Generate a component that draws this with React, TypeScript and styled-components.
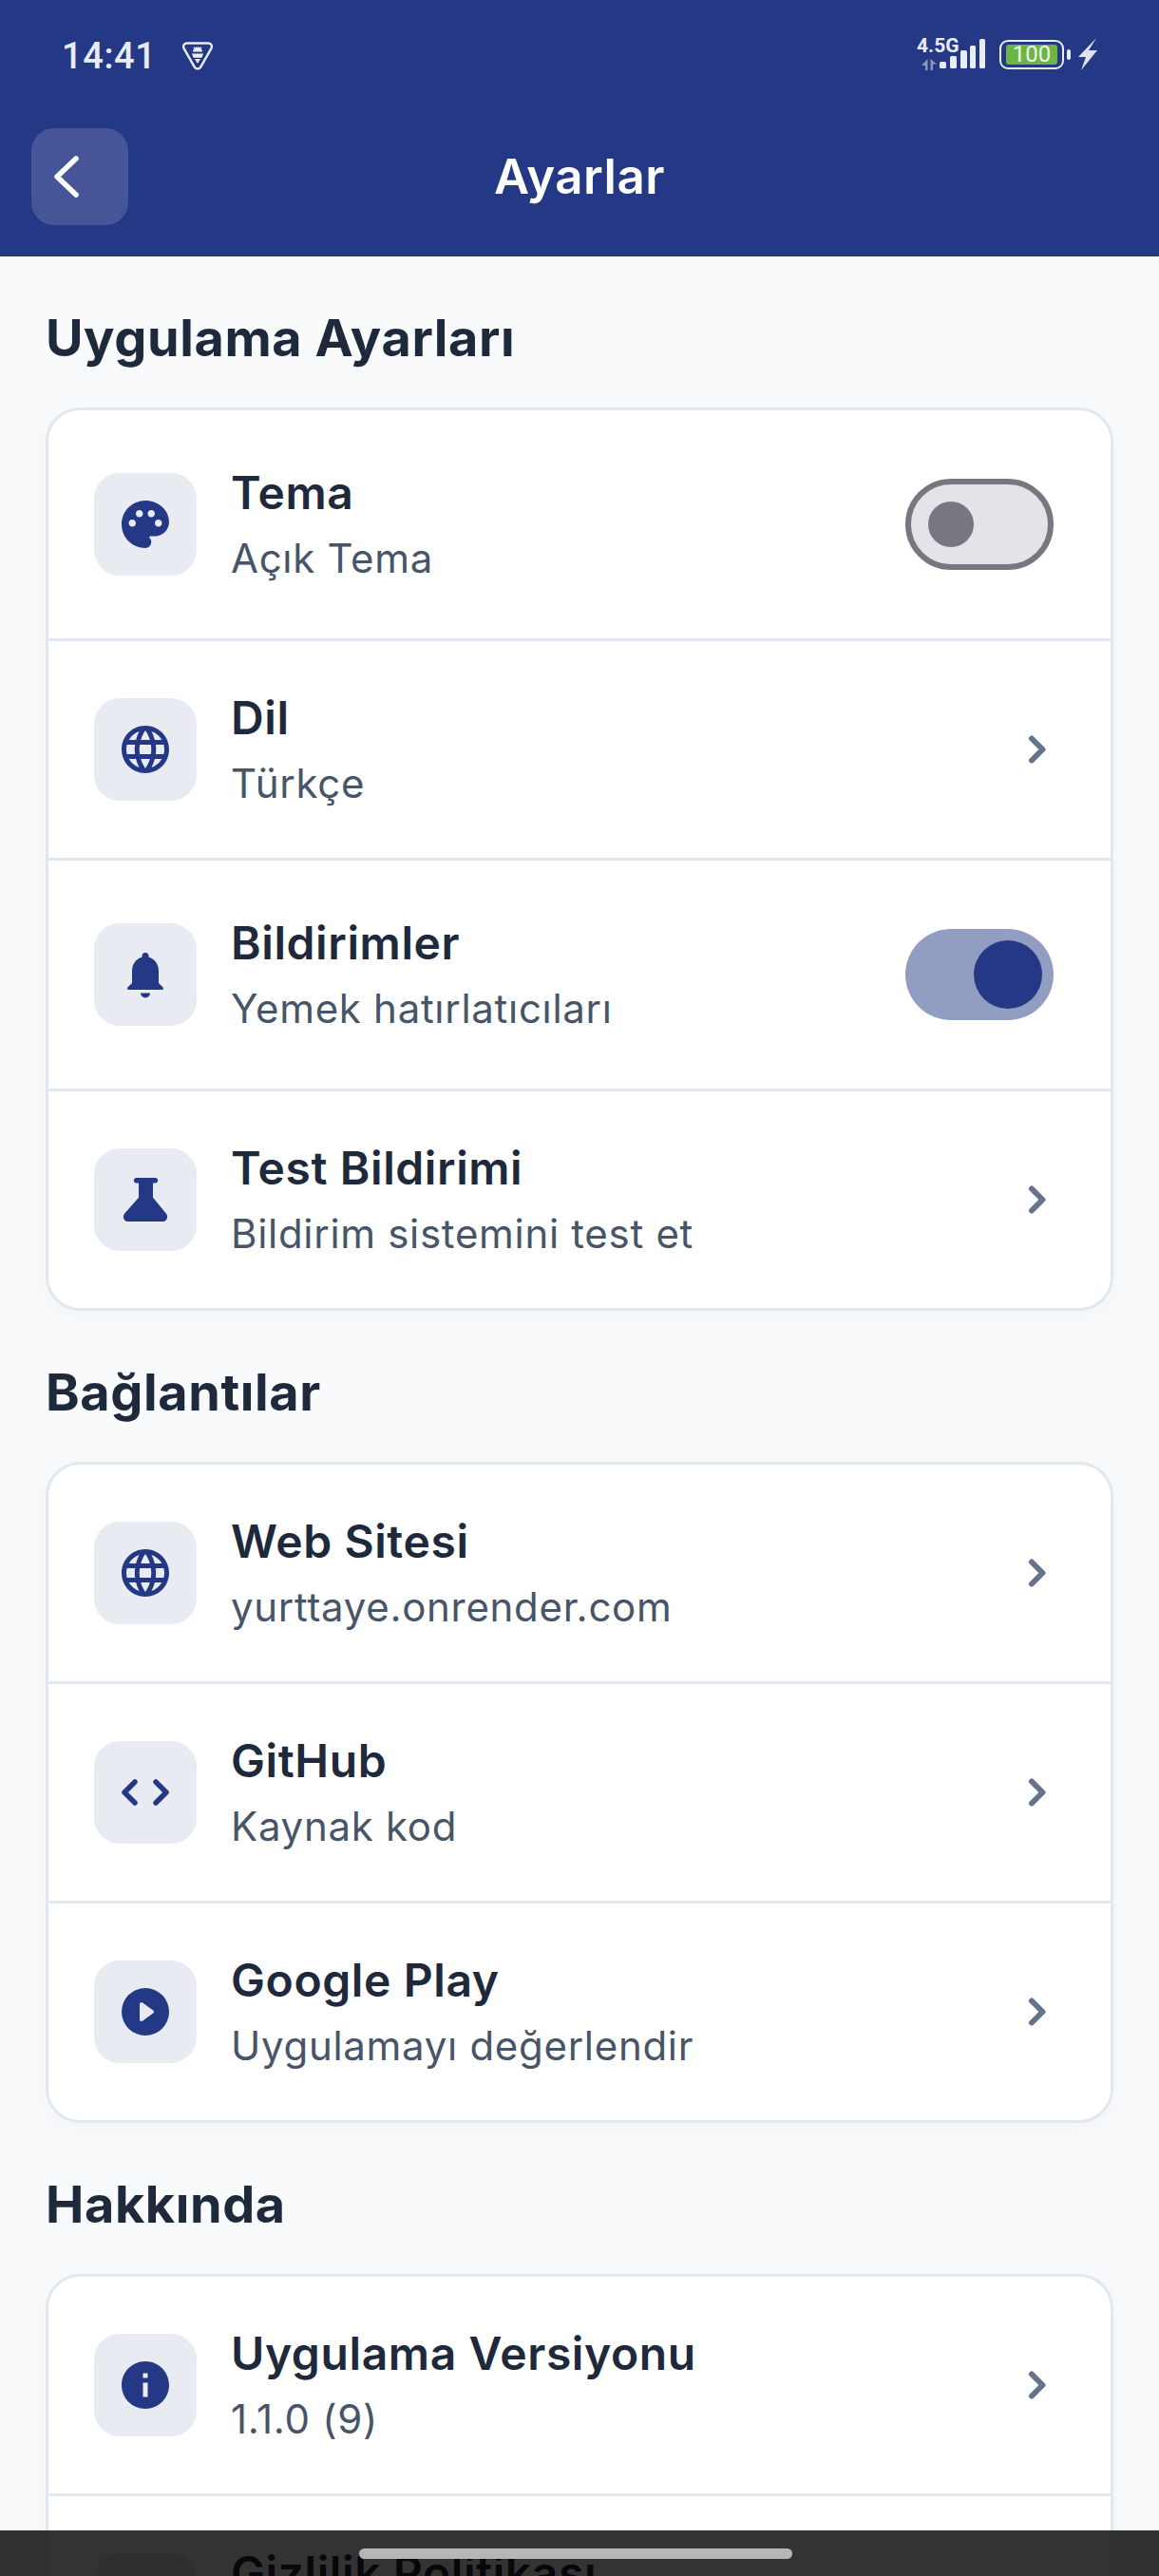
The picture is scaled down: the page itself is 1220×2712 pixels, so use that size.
import React from 'react';
import styled, { createGlobalStyle } from 'styled-components';
import {
  MdDescription,
  MdInfo,
  MdLanguage,
  MdPalette,
} from 'react-icons/md';

const GlobalStyle = createGlobalStyle`
  html, body {
    margin: 0;
    padding: 0;
    background: #f8fafc;
  }
  body {
    font-family: 'Inter', 'Noto Sans', sans-serif;
  }
`;

const Screen = styled.div`
  position: relative;
  width: 1220px;
  height: 2712px;
  overflow: hidden;
  background: #f8fafc;
`;

const Header = styled.header`
  height: 270px;
  box-sizing: border-box;
  background: #253885;
  display: flex;
  flex-direction: column;
`;

const StatusBar = styled.div`
  height: 135px;
  box-sizing: border-box;
  padding: 40px 64px 0 65px;
  display: flex;
  justify-content: space-between;
  align-items: flex-start;
  color: #e8ecf5;
`;

const StatusLeft = styled.div`
  display: flex;
  align-items: center;
  gap: 27px;
`;

const Clock = styled.span`
  font-family: 'Roboto', sans-serif;
  font-size: 38px;
  line-height: 38px;
  font-weight: 500;
  letter-spacing: 0.6px;
`;

const StatusRight = styled.div`
  display: flex;
  align-items: flex-start;
`;

const NetworkStack = styled.div`
  width: 24px;
  display: flex;
  flex-direction: column;
  white-space: nowrap;
  svg {
    margin: 6px 0 0 4px;
  }
`;

const NetworkLabel = styled.span`
  font-family: 'Roboto', sans-serif;
  font-size: 21px;
  line-height: 16px;
  font-weight: 700;
`;

const BatteryShell = styled.div`
  position: relative;
  box-sizing: border-box;
  width: 68px;
  height: 31px;
  margin: 2px 0 0 13px;
  padding: 3px 5px;
  border: 2px solid #e8ecf5;
  border-radius: 9px;
  &::after {
    content: '';
    position: absolute;
    right: -9px;
    top: 8px;
    width: 4px;
    height: 11px;
    border-radius: 2px;
    background: #e8ecf5;
  }
`;

const BatteryFill = styled.div`
  height: 21px;
  border-radius: 3px;
  background: #6cb644;
  color: #eef5e6;
  font-family: 'Roboto', sans-serif;
  font-size: 24px;
  line-height: 21px;
  text-align: center;
`;

const NavRow = styled.div`
  position: relative;
  display: flex;
  align-items: center;
  justify-content: center;
  height: 102px;
  padding: 0 33px;
`;

const BackButton = styled.button`
  position: absolute;
  left: 33px;
  top: 0;
  width: 102px;
  height: 102px;
  border: 0;
  padding: 0;
  border-radius: 24px;
  background: rgba(255, 255, 255, 0.15);
  color: #fff;
  display: flex;
  align-items: center;
  justify-content: center;
  svg {
    margin-left: -28px;
  }
`;

const PageTitle = styled.h1`
  margin: 0;
  color: #fff;
  font-size: 51px;
  line-height: 66px;
  font-weight: 600;
  letter-spacing: 0.5px;
`;

const Content = styled.main`
  padding: 0 48px;
  display: flex;
  flex-direction: column;
`;

const SectionTitle = styled.h2`
  margin: 0;
  height: 159px;
  box-sizing: border-box;
  padding-top: 53px;
  color: #1e293b;
  font-size: 54px;
  line-height: 66px;
  font-weight: 700;
  letter-spacing: 0.6px;
`;

const Card = styled.section`
  background: #fff;
  border: 3px solid #e2e8f0;
  border-radius: 36px;
  box-shadow: 0 6px 24px rgba(15, 23, 42, 0.03);
  overflow: hidden;
`;

const Row = styled.div<{ $tall?: boolean }>`
  height: ${(p) => (p.$tall ? 240 : 228)}px;
  padding: 0 48px;
  display: flex;
  align-items: center;
  gap: 36px;
  &:not(:first-child) {
    border-top: 3px solid #e2e8f0;
  }
`;

const IconBox = styled.div`
  flex: none;
  width: 108px;
  height: 108px;
  border-radius: 27px;
  background: #e9ebf3;
  color: #253885;
  display: flex;
  align-items: center;
  justify-content: center;
  font-size: 60px;
`;

const TextBlock = styled.div`
  flex: 1;
  min-width: 0;
`;

const RowTitle = styled.div`
  color: #1e293b;
  font-size: 48px;
  line-height: 60px;
  font-weight: 600;
  letter-spacing: 0.6px;
`;

const RowSub = styled.div`
  margin-top: 12px;
  color: #475569;
  font-size: 42px;
  line-height: 54px;
  font-weight: 400;
  letter-spacing: 0.7px;
`;

const ChevronWrap = styled.div`
  flex: none;
  color: #64748b;
  display: flex;
`;

const Track = styled.div<{ $on?: boolean }>`
  flex: none;
  box-sizing: border-box;
  width: 156px;
  height: 96px;
  margin-right: 12px;
  border-radius: 48px;
  display: flex;
  align-items: center;
  justify-content: ${(p) => (p.$on ? 'flex-end' : 'flex-start')};
  padding: ${(p) => (p.$on ? '0 12px' : '0 18px')};
  background: ${(p) => (p.$on ? '#929dc2' : '#e3e3e9')};
  border: ${(p) => (p.$on ? '0' : '6px solid #77777f')};
`;

const Thumb = styled.div<{ $on?: boolean }>`
  width: ${(p) => (p.$on ? 72 : 48)}px;
  height: ${(p) => (p.$on ? 72 : 48)}px;
  border-radius: 50%;
  background: ${(p) => (p.$on ? '#253885' : '#77777f')};
`;

const NavOverlay = styled.div`
  position: absolute;
  left: 0;
  right: 0;
  bottom: 0;
  height: 48px;
  background: rgba(0, 0, 0, 0.8);
`;

const NavHandle = styled.div`
  position: absolute;
  left: 378px;
  top: 19px;
  width: 456px;
  height: 11px;
  border-radius: 6px;
  background: #b6b6b6;
`;

const ShieldIcon = () => (
  <svg width="34" height="30" viewBox="0 0 34 30" fill="none">
    <path d="M5.5 1.5h23a3.6 3.6 0 0 1 3 5.4L20.2 26.6a3.7 3.7 0 0 1-6.4 0L2.5 6.9a3.6 3.6 0 0 1 3-5.4z" stroke="#e8ecf5" strokeWidth="2.4" />
    <path d="M12 10.5a5 5 0 0 1 10 0z" fill="#e8ecf5" />
    <path d="M11 12.5h12l-1.6 4.2H12.6zM14 18h6l-3 5z" fill="#e8ecf5" />
    <path d="M13 5.5l1.6 2M21 5.5l-1.6 2" stroke="#e8ecf5" strokeWidth="1.2" />
  </svg>
);

const TransferIcon = () => (
  <svg width="18" height="12" viewBox="0 0 18 12" fill="#8b96bd">
    <path d="M7.5 0v12H5V7H1zM10.5 0L17 5.5h-4V12h-2.5z" />
  </svg>
);

const SignalIcon = () => (
  <svg width="50" height="33" viewBox="0 0 50 33" fill="#e8ecf5">
    <rect x="0" y="25" width="7" height="7" rx="1.5" />
    <rect x="11" y="19" width="7" height="13" rx="1.5" />
    <rect x="22" y="13" width="7" height="19" rx="1.5" />
    <rect x="32" y="8" width="6" height="24" rx="1.5" />
    <rect x="42" y="1" width="6" height="31" rx="1.5" />
  </svg>
);

const BoltIcon = () => (
  <svg width="22" height="34" viewBox="0 0 22 34" fill="#dfe3ef" style={{ marginLeft: 14 }}>
    <path d="M20 0L1 20h8L4 34l17-21h-9z" />
  </svg>
);

const BackIcon = () => (
  <svg width="30" height="48" viewBox="0 0 30 48" fill="none" stroke="currentColor" strokeWidth="5.5" strokeLinecap="round" strokeLinejoin="round">
    <path d="M25 5L5 24l20 19" />
  </svg>
);

const ChevronIcon = () => (
  <svg width="60" height="60" viewBox="0 0 60 60" fill="none" stroke="currentColor" strokeWidth="6" strokeLinecap="round" strokeLinejoin="round">
    <path d="M25 18.5L36.5 30 25 41.5" />
  </svg>
);

const BellIcon = () => (
  <svg width="60" height="60" viewBox="0 0 60 60" fill="currentColor">
    <path d="M26.5 10.5a3.5 3.5 0 0 1 7 0v1.2C39.8 13.3 44 19 44 26v13l4.6 4.5c.8.8.2 2.5-1 2.5H12.4c-1.2 0-1.8-1.7-1-2.5L16 39V26c0-7 4.2-12.7 10.5-14.3z" />
    <path d="M25 49.5h10a5 5 0 0 1-10 0z" />
  </svg>
);

const FlaskIcon = () => (
  <svg width="60" height="60" viewBox="0 0 60 60" fill="currentColor">
    <path d="M20.6 7h19.8a2.6 2.6 0 0 1 0 5.4H38v15.4l14 17c2.5 3.2.4 8.2-3.8 8.2H11.8C7.6 53 5.5 48 8 44.8l15-17V12.4h-2.4a2.7 2.7 0 0 1 0-5.4z" />
  </svg>
);

const CodeIcon = () => (
  <svg width="60" height="60" viewBox="0 0 60 60" fill="none" stroke="currentColor" strokeWidth="5.5" strokeLinecap="round" strokeLinejoin="round">
    <path d="M19 19L8 30l11 11M41 19l11 11-11 11" />
  </svg>
);

const PlayIcon = () => (
  <svg width="60" height="60" viewBox="0 0 60 60">
    <circle cx="30" cy="30" r="25" fill="currentColor" />
    <path d="M26 22l11 8-11 8z" fill="#e9ebf3" stroke="#e9ebf3" strokeWidth="4" strokeLinejoin="round" />
  </svg>
);

const Toggle = ({ on }: { on?: boolean }) => (
  <Track $on={on}>
    <Thumb $on={on} />
  </Track>
);

type Item = {
  icon: React.ReactNode;
  title: string;
  sub: string;
  toggle?: 'on' | 'off';
};

const sections: { title: string; items: Item[] }[] = [
  {
    title: 'Uygulama Ayarları',
    items: [
      { icon: <MdPalette />, title: 'Tema', sub: 'Açık Tema', toggle: 'off' },
      { icon: <MdLanguage />, title: 'Dil', sub: 'Türkçe' },
      { icon: <BellIcon />, title: 'Bildirimler', sub: 'Yemek hatırlatıcıları', toggle: 'on' },
      { icon: <FlaskIcon />, title: 'Test Bildirimi', sub: 'Bildirim sistemini test et' },
    ],
  },
  {
    title: 'Bağlantılar',
    items: [
      { icon: <MdLanguage />, title: 'Web Sitesi', sub: 'yurttaye.onrender.com' },
      { icon: <CodeIcon />, title: 'GitHub', sub: 'Kaynak kod' },
      { icon: <PlayIcon />, title: 'Google Play', sub: 'Uygulamayı değerlendir' },
    ],
  },
  {
    title: 'Hakkında',
    items: [
      { icon: <MdInfo />, title: 'Uygulama Versiyonu', sub: '1.1.0 (9)' },
      { icon: <MdDescription />, title: 'Gizlilik Politikası', sub: 'Gizlilik politikamızı okuyun' },
    ],
  },
];

const App: React.FC = () => (
  <Screen>
    <GlobalStyle />
    <Header>
      <StatusBar>
        <StatusLeft>
          <Clock>14:41</Clock>
          <ShieldIcon />
        </StatusLeft>
        <StatusRight>
          <NetworkStack>
            <NetworkLabel>4.5G</NetworkLabel>
            <TransferIcon />
          </NetworkStack>
          <SignalIcon />
          <BatteryShell>
            <BatteryFill>100</BatteryFill>
          </BatteryShell>
          <BoltIcon />
        </StatusRight>
      </StatusBar>
      <NavRow>
        <BackButton aria-label="Geri">
          <BackIcon />
        </BackButton>
        <PageTitle>Ayarlar</PageTitle>
      </NavRow>
    </Header>
    <Content>
      {sections.map((section) => (
        <React.Fragment key={section.title}>
          <SectionTitle>{section.title}</SectionTitle>
          <Card>
            {section.items.map((item) => (
              <Row key={item.title} $tall={!!item.toggle}>
                <IconBox>{item.icon}</IconBox>
                <TextBlock>
                  <RowTitle>{item.title}</RowTitle>
                  <RowSub>{item.sub}</RowSub>
                </TextBlock>
                {item.toggle ? (
                  <Toggle on={item.toggle === 'on'} />
                ) : (
                  <ChevronWrap>
                    <ChevronIcon />
                  </ChevronWrap>
                )}
              </Row>
            ))}
          </Card>
        </React.Fragment>
      ))}
    </Content>
    <NavOverlay>
      <NavHandle />
    </NavOverlay>
  </Screen>
);

export default App;
